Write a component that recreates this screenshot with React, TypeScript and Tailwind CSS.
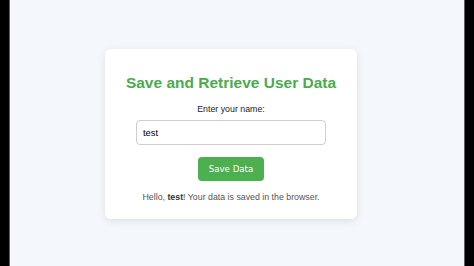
import { useState } from "react";

export default function App() {
  const [name, setName] = useState("test");
  const [saved, setSaved] = useState("test");

  return (
    <div className="flex h-[266px] w-[474px] bg-black font-['Liberation_Sans',Arial,sans-serif]">
      <div className="w-[9px] shrink-0 bg-black" />
      <div className="w-px shrink-0 bg-[#5d6166]" />
      {/* Page */}
      <main className="flex flex-1 items-center justify-center bg-[#f4f7fb] pt-[2px] pr-[12px]">
        <div className="flex w-[252px] flex-col items-center rounded-[6px] bg-white pt-[25px] pb-[17px] shadow-[0_2px_8px_rgba(0,0,0,0.1)]">
          <h1 className="text-[15.5px] leading-[18px] font-bold text-[#4aab4e]">
            Save and Retrieve User Data
          </h1>
          <label className="mt-[12px] text-[8.8px] leading-[10px] text-[#222]">
            Enter your name:
          </label>
          <input
            value={name}
            onChange={(e) => setName(e.target.value)}
            className="mt-[6px] h-[25px] w-[190px] rounded-[4px] border-[1.5px] border-[#cfcfcf] px-[6px] text-[9.3px] text-black outline-none"
          />
          <button
            onClick={() => setSaved(name)}
            className="mt-[12px] h-[24px] w-[66px] rounded-[4px] bg-[#4caf50] font-['DejaVu_Sans',sans-serif] text-[8.6px] text-white"
          >
            Save Data
          </button>
          <p className="mt-[11px] text-[8.8px] leading-[10px] text-[#555]">
            Hello, <b className="text-[#333]">{saved}</b>! Your data is saved in the browser.
          </p>
        </div>
      </main>
      <div className="w-px shrink-0 bg-[#5d6166]" />
      <div className="w-[9px] shrink-0 bg-black" />
    </div>
  );
}
